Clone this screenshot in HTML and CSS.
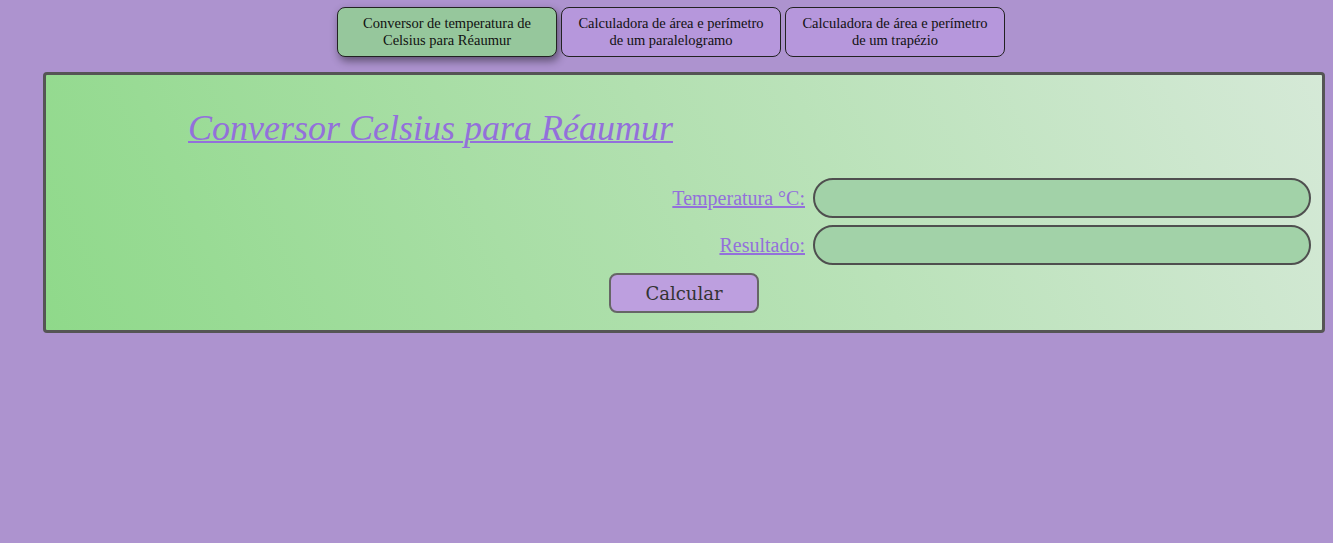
FILE: index.html
```html
<!DOCTYPE html>
<html lang="pt">
<head>
<meta charset="utf-8">
<title>Conversor</title>
<link rel="stylesheet" href="styles.css">
</head>
<body>
<nav class="tabs">
  <button class="tab active">Conversor de temperatura de Celsius para Réaumur</button>
  <button class="tab">Calculadora de área e perímetro de um paralelogramo</button>
  <button class="tab">Calculadora de área e perímetro de um trapézio</button>
</nav>
<section class="card">
  <h1 class="title">Conversor Celsius para Réaumur</h1>
  <div class="form">
    <label class="label" for="temp">Temperatura °C:</label>
    <input class="field" id="temp" type="text">
    <label class="label" for="res">Resultado:</label>
    <input class="field" id="res" type="text">
  </div>
  <div class="actions">
    <button class="calc">Calcular</button>
  </div>
</section>
</body>
</html>
```
FILE: styles.css
```css
html, body {
  margin: 0;
  padding: 0;
}
body {
  background: #ad93cf;
  padding: 7px 8px 8px 8px;
  font-family: "DejaVu Serif", "Liberation Serif", serif;
}
.tabs {
  display: flex;
  justify-content: center;
  gap: 4px;
  margin-left: 9px;
}
.tab {
  width: 220px;
  height: 50px;
  border: 1px solid #222;
  border-radius: 8px;
  background: #b697dc;
  font-family: "Liberation Serif", serif;
  font-size: 14.5px;
  line-height: 17px;
  color: #111;
  padding: 0 14px;
}
.tab.active {
  background: #96c79c;
  box-shadow: 2px 4px 8px rgba(0,0,0,0.45);
}
.card {
  margin: 15px 0 0 35px;
  border: 3px solid #555;
  border-radius: 4px;
  box-sizing: border-box;
  height: 261px;
  background: linear-gradient(66deg, #8fd98a 0%, #b2e0b0 50%, #d5e9d7 100%);
  padding: 32px 11px 0 142px;
}
.title {
  margin: 0;
  font-family: "Liberation Serif", serif;
  font-style: italic;
  font-weight: normal;
  font-size: 36px;
  line-height: 42px;
  color: #9370db;
  text-decoration: underline;
  text-decoration-thickness: 2px;
}
.form {
  margin-top: 29px;
  display: grid;
  grid-template-columns: 1fr 498px;
  column-gap: 8px;
  row-gap: 7px;
  align-items: center;
}
.label {
  text-align: right;
  font-family: "Liberation Serif", serif;
  font-size: 20px;
  color: #9370db;
  text-decoration: underline;
}
.field {
  height: 40px;
  box-sizing: border-box;
  border: 2px solid #4f4f4f;
  border-radius: 20px;
  background: #a2d2a8;
  outline: none;
}
.actions {
  margin: 8px 0 0 -131px;
  display: flex;
  justify-content: center;
}
.calc {
  width: 150px;
  height: 40px;
  box-sizing: border-box;
  border: 2px solid #666;
  border-radius: 8px;
  background: #bd9fdf;
  font-family: "DejaVu Serif", serif;
  font-size: 18px;
  color: #333;
}
```
